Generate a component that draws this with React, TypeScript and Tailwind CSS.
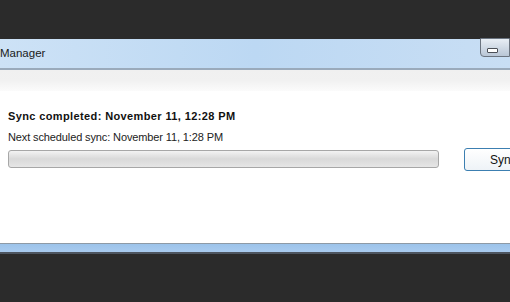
import * as React from 'react';

export default function App() {
  return (
    <div
      className="w-[510px] h-[302px] overflow-hidden bg-[#2b2b2b] flex flex-col"
      style={{ fontFamily: '"Liberation Sans", Arial, sans-serif' }}
    >
      {/* dark space above the window */}
      <div className="h-[39px] shrink-0" />

      {/* Title bar */}
      <div className="h-[29px] shrink-0 flex items-center justify-between bg-gradient-to-r from-[#cde2f6] via-[#bcd8f3] to-[#c8def4] relative">
        <span className="text-[11.5px] text-[#1a1a1a] leading-none pt-[1px]">Manager</span>
        <div className="absolute left-[480px] top-[-1px] w-[30px] h-[19px] rounded-bl-[4px] border border-[#6b7480] bg-gradient-to-b from-[#e8eef5] to-[#b9c6d6] flex items-center justify-center">
          <div className="w-[11px] h-[5px] border border-[#4a4f57] bg-white rounded-[1px] mt-[5px] ml-[-6px]" />
        </div>
      </div>
      <div className="h-[2px] shrink-0 bg-[#9aaabb]" />

      {/* Toolbar band */}
      <div className="h-[21px] shrink-0 bg-gradient-to-b from-[#f0f0f0] via-[#f1f1f1] to-[#fbfbfb]" />

      {/* Content */}
      <div className="h-[152px] shrink-0 bg-white px-[8px] pt-[18px]">
        <div className="text-[11px] font-bold text-[#111] leading-[14px] tracking-[0.38px] whitespace-nowrap">
          Sync completed: November 11, 12:28 PM
        </div>
        <div className="mt-[7px] text-[11px] text-[#222] leading-[14px] tracking-[-0.12px] whitespace-nowrap">
          Next scheduled sync: November 11, 1:28 PM
        </div>
        <div className="flex items-center mt-[3px] w-[530px]">
          <div className="w-[431px] h-[18px] shrink-0 rounded-[3px] border border-[#a7a7a7] bg-gradient-to-b from-[#f3f3f3] via-[#d9d9d9] to-[#e6e6e6]" />
          <button className="ml-[25px] w-[60px] h-[23px] shrink-0 rounded-[3px] border border-[#3c7fb1] bg-gradient-to-b from-[#ffffff] to-[#eef3f7] text-[12px] text-[#111] text-left pl-[25px] mt-[1px]">
            Sync
          </button>
        </div>
      </div>

      {/* Bottom frame */}
      <div className="h-[1px] shrink-0 bg-[#8e9aa6]" />
      <div className="h-[8px] shrink-0 bg-gradient-to-b from-[#9cc3ea] to-[#a9cbef]" />
      <div className="h-[2px] shrink-0 bg-[#4d5560]" />
    </div>
  );
}
